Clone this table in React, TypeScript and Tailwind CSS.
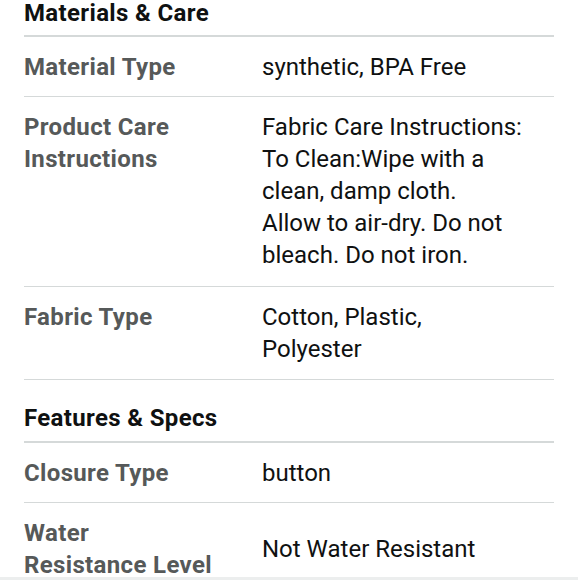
import React from "react";

const font = { fontFamily: "Roboto, 'Noto Sans', sans-serif" };

function Row({ label, value, center, pb = "pb-[14px]" }: { label: React.ReactNode; value: React.ReactNode; center?: boolean; pb?: string }) {
  return (
    <div className={`flex ${center ? "items-center" : "items-start"} border-b border-[#d5d9d9] pt-[14px] ${pb}`}>
      <div className="w-[238px] shrink-0 font-bold tracking-[0.35px] text-[#565959]">{label}</div>
      <div className="flex-1 text-[#0f1111]">{value}</div>
    </div>
  );
}

export default function App() {
  return (
    <div className="w-[578px] h-[580px] flex flex-col bg-white" style={font}>
      <div className="h-[577px] overflow-hidden">
        <div className="-mt-[3px] px-6 text-[24px] leading-[32px]">
          <div className="border-b-2 border-[#d5d9d9] pb-[6px]">
            <h2 className="font-bold tracking-[0.35px] text-[#0f1111]">Materials &amp; Care</h2>
          </div>
          <Row label="Material Type" value="synthetic, BPA Free" pb="pb-[13px]" />
          <Row
            label={<>Product Care<br />Instructions</>}
            value={<>Fabric Care Instructions:<br />To Clean:Wipe with a<br />clean, damp cloth.<br />Allow to air-dry. Do not<br />bleach. Do not iron.</>}
            pb="pb-[15px]"
          />
          <Row label="Fabric Type" value={<>Cotton, Plastic,<br />Polyester</>} />
          <div className="border-b-2 border-[#d5d9d9] pt-[22px] pb-[7px]">
            <h2 className="font-bold tracking-[0.35px] text-[#0f1111]">Features &amp; Specs</h2>
          </div>
          <Row label="Closure Type" value="button" pb="pb-[13px]" />
          <Row label={<>Water<br />Resistance Level</>} value="Not Water Resistant" center />
        </div>
      </div>
      <div className="h-[3px] bg-[#eceeee]" />
    </div>
  );
}
